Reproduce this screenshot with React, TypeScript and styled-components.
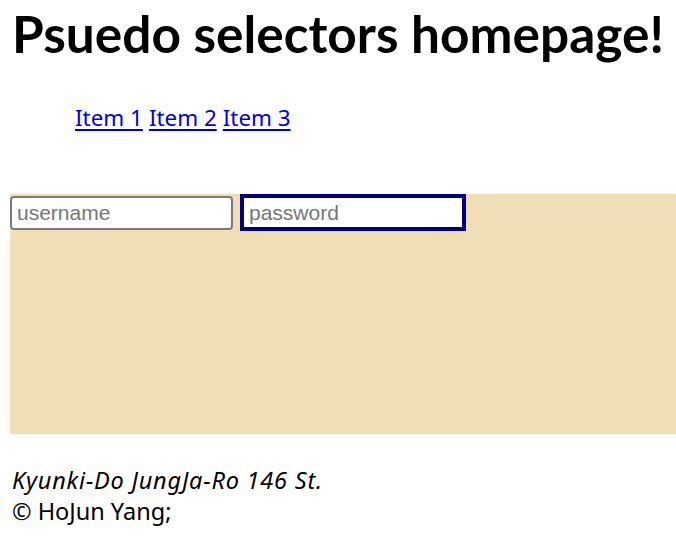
import React from 'react'
import styled, { createGlobalStyle } from 'styled-components'

const GlobalStyle = createGlobalStyle`
  body {
    margin: 0;
    background: #fff;
    font-family: 'Noto Sans', 'Noto Sans CJK KR', sans-serif;
    color: #000;
  }
`

export default function App() {
  return (
    <>
      <GlobalStyle />
      <Page>
        <Title>Psuedo selectors homepage!</Title>
        <Nav>
          <NavList>
            <NavItem><NavLink href='#'>Item 1</NavLink></NavItem>
            <NavItem><NavLink href='#'>Item 2</NavLink></NavItem>
            <NavItem><NavLink href='#'>Item 3</NavLink></NavItem>
          </NavList>
        </Nav>
        <LoginSection>
          <Field type='text' placeholder='username' />
          <Field type='password' placeholder='password' $focused />
        </LoginSection>
        <Footer>
          <Address>Kyunki-Do JungJa-Ro 146 St.</Address>
          <Copy>© HoJun Yang;</Copy>
        </Footer>
      </Page>
    </>
  )
}

const Page = styled.div`
  padding-left: 10px;
`

const Title = styled.h1`
  margin: 0 0 0 2px;
  font-family: Lato, 'Noto Sans', sans-serif;
  font-size: 51.4px;
  line-height: 66px;
  font-weight: 700;
  white-space: nowrap;
`

const Nav = styled.nav`
  margin-top: 37px;
`

const NavList = styled.ul`
  margin: 0;
  padding-left: 65px;
  list-style: none;
  font-size: 22.4px;
  line-height: 30px;
`

const NavItem = styled.li`
  display: inline;
  & + & {
    margin-left: 6px;
  }
`

const NavLink = styled.a`
  color: #0000dd;
  text-decoration: underline;
  text-underline-offset: 3px;
`

const LoginSection = styled.section`
  margin-top: 61px;
  height: 240px;
  background: #f0deb7;
  display: flex;
  align-items: flex-start;
  gap: 7px;
`

const Field = styled.input<{ $focused?: boolean }>`
  box-sizing: border-box;
  margin: ${(p) => (p.$focused ? '0' : '2px 0 0')};
  width: ${(p) => (p.$focused ? '226px' : '223px')};
  height: ${(p) => (p.$focused ? '37px' : '34px')};
  padding: 0 5px;
  font-family: 'Liberation Sans', Arial, sans-serif;
  font-size: 21px;
  background: #fff;
  border: ${(p) => (p.$focused ? '4px solid #000080' : '2px solid #7a7a7a')};
  border-radius: ${(p) => (p.$focused ? '0' : '4px')};
  outline: none;
  &::placeholder {
    color: #767676;
  }
`

const Footer = styled.footer`
  margin-top: 31px;
  padding-left: 2px;
  font-size: 23.5px;
  line-height: 31px;
`

const Address = styled.address`
  font-style: italic;
  letter-spacing: 0.8px;
`

const Copy = styled.p`
  margin: 0;
`
